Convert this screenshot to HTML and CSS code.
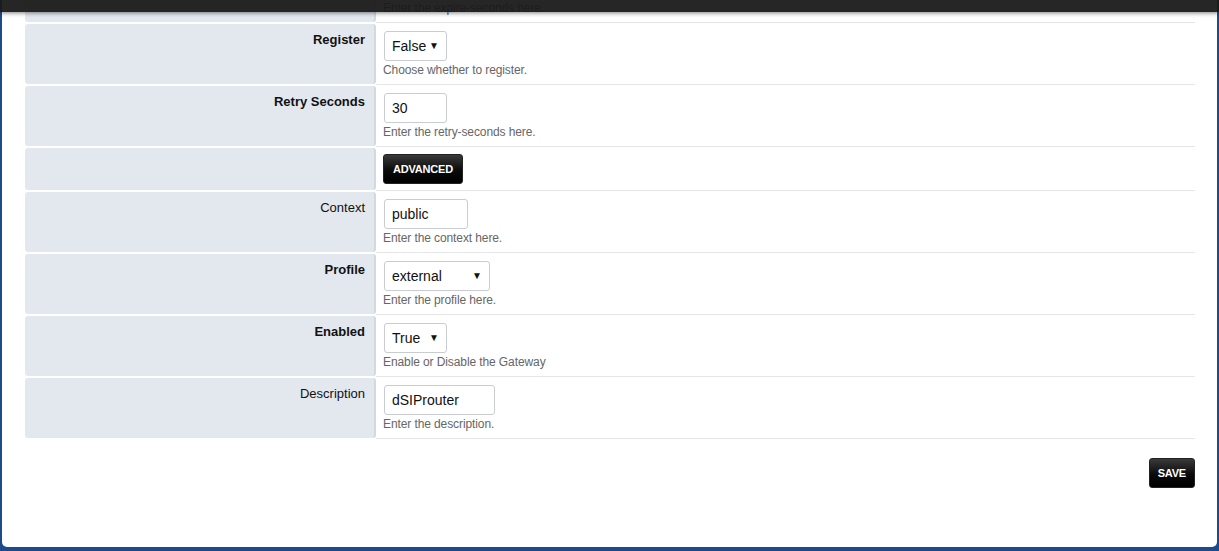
FILE: index.html
```html
<!DOCTYPE html>
<html lang="en">
<head>
  <meta charset="UTF-8">
  <title>Edit Gateway</title>
  <link rel="stylesheet" href="styles.css">
</head>
<body>

  <div class="topbar"></div>

  <div class="panel">
    <div class="form-table">

      <div class="row">
        <div class="label"></div>
        <div class="value">
          <input type="text" class="field w-sm" value="3600">
          <div class="help">Enter the expire-seconds here.</div>
        </div>
      </div>

      <div class="row">
        <div class="label bold">Register</div>
        <div class="value">
          <div class="select w-sm">False <span class="caret">&#9660;</span></div>
          <div class="help">Choose whether to register.</div>
        </div>
      </div>

      <div class="row">
        <div class="label bold">Retry Seconds</div>
        <div class="value">
          <input type="text" class="field w-sm" value="30">
          <div class="help">Enter the retry-seconds here.</div>
        </div>
      </div>

      <div class="row row-short">
        <div class="label"></div>
        <div class="value">
          <button class="btn">ADVANCED</button>
        </div>
      </div>

      <div class="row">
        <div class="label">Context</div>
        <div class="value">
          <input type="text" class="field w-md" value="public">
          <div class="help">Enter the context here.</div>
        </div>
      </div>

      <div class="row">
        <div class="label bold">Profile</div>
        <div class="value">
          <div class="select w-lg">external <span class="caret">&#9660;</span></div>
          <div class="help">Enter the profile here.</div>
        </div>
      </div>

      <div class="row">
        <div class="label bold">Enabled</div>
        <div class="value">
          <div class="select w-sm">True <span class="caret">&#9660;</span></div>
          <div class="help">Enable or Disable the Gateway</div>
        </div>
      </div>

      <div class="row">
        <div class="label">Description</div>
        <div class="value">
          <input type="text" class="field w-xl" value="dSIProuter">
          <div class="help">Enter the description.</div>
        </div>
      </div>

    </div>

    <div class="actions">
      <button class="btn">SAVE</button>
    </div>
  </div>

</body>
</html>
```

FILE: styles.css
```css
html, body {
  height: 100%;
}

body {
  margin: 0;
  padding: 0 2px 4px 2px;
  box-sizing: border-box;
  background-color: #1d4a89;
  font-family: 'Liberation Sans', Arial, sans-serif;
  font-size: 13px;
  color: #111;
  overflow: hidden;
}

.topbar {
  position: fixed;
  top: 0;
  left: 0;
  right: 0;
  height: 12px;
  background: rgba(24, 24, 24, 0.94);
  box-shadow: 0 1px 4px rgba(0, 0, 0, 0.5);
  z-index: 10;
}

.panel {
  background: #fff;
  height: calc(100% + 38px);
  margin-top: -38px;
  border-radius: 0 0 5px 5px;
  padding: 0 22px 0 23px;
  box-sizing: border-box;
}

.form-table {
  display: flex;
  flex-direction: column;
}

.row {
  display: grid;
  grid-template-columns: 351px 1fr;
  height: 60px;
  margin-bottom: 2px;
}

.row-short {
  height: 42px;
}

.label {
  background: #e3e8ef;
  border-right: 2px solid #d3d9e1;
  border-radius: 3px;
  text-align: right;
  padding: 8px 9px 0 0;
  font-size: 13px;
  line-height: 15px;
}

.bold {
  font-weight: bold;
}

.value {
  border-bottom: 1px solid #e6e6ea;
  margin-bottom: -1px;
  padding: 7px 0 0 8px;
}

.field, .select {
  display: block;
  box-sizing: border-box;
  height: 30px;
  margin: 0 0 2px 0;
  padding: 0 7px;
  border: 1px solid #c9ccd2;
  border-radius: 3px;
  background: #fff;
  font-family: 'Liberation Sans', Arial, sans-serif;
  font-size: 14px;
  color: #111;
  line-height: 28px;
}

.select {
  display: flex;
  justify-content: space-between;
  align-items: center;
}

.caret {
  font-size: 10px;
  color: #111;
}

.w-sm { width: 63px; }
.w-md { width: 84px; }
.w-lg { width: 106px; }
.w-xl { width: 111px; }

.help {
  font-size: 12px;
  line-height: 14px;
  color: #666;
  margin-left: -1px;
  letter-spacing: -0.1px;
}

.btn {
  display: block;
  height: 30px;
  padding: 0 9px;
  border: 1px solid #222;
  border-radius: 3px;
  background: linear-gradient(#3a3a3a 0%, #0b0b0b 55%, #000 100%);
  color: #fff;
  font-family: 'Liberation Sans', Arial, sans-serif;
  font-size: 11px;
  font-weight: bold;
  letter-spacing: -0.2px;
  cursor: pointer;
}

.row-short .value {
  padding-top: 6px;
  padding-left: 7px;
}

.actions {
  display: flex;
  justify-content: flex-end;
  padding-top: 18px;
}

.actions .btn {
  padding: 0 8px;
}
```
